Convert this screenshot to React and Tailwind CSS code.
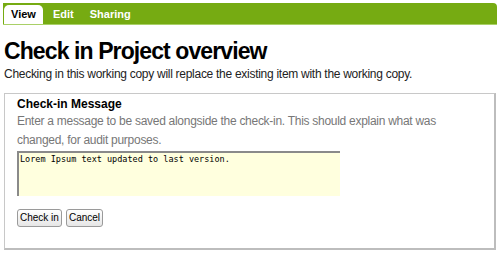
export default function App() {
  return (
    <div className="h-[256px] w-[500px] bg-white pt-[3px] font-['Liberation_Sans',Arial,sans-serif] text-black">
      <div className="mx-[3px] flex h-[22px] items-end rounded-tr-[4px] border-b border-[#a9d067] bg-[#76ab12] pl-[1px]">
        <div className="flex h-[19px] w-[39px] items-center justify-center rounded-t-[5px] bg-white text-[11px] font-bold">
          View
        </div>
        <div className="flex h-[19px] items-center pl-[10px] text-[11px] font-bold text-white">Edit</div>
        <div className="flex h-[19px] items-center pl-[16px] text-[11px] font-bold text-white">Sharing</div>
      </div>

      <h1 className="mt-[12px] pl-[4px] text-[23px] leading-[28px] font-bold tracking-[-0.9px]">
        Check in Project overview
      </h1>
      <p className="mt-[2px] pl-[4px] text-[12px] leading-[14px] tracking-[-0.28px] text-[#222]">
        Checking in this working copy will replace the existing item with the working copy.
      </p>

      <div className="mx-[4px] mt-[12px] h-[157px] border border-r-2 border-b-2 border-[#c8c8c8] border-r-[#bdbdbd] border-b-[#bdbdbd] pl-[12px] pt-[3px]">
        <div className="text-[12px] leading-[15px] font-bold">Check-in Message</div>
        <p className="w-[430px] text-[12px] leading-[19px] tracking-[-0.28px] text-[#777]">
          Enter a message to be saved alongside the check-in. This should explain what was changed, for audit purposes.
        </p>
        <div className="mt-[1px] h-[45px] w-[323px] border-t-2 border-l-2 border-[#8a8a8a] bg-[#ffffde] pl-[1px] pt-[1px] font-['DejaVu_Sans_Mono',monospace] text-[8.5px] leading-[10px]">
          Lorem Ipsum text updated to last version.
        </div>
        <div className="mt-[13px] flex gap-[4px]">
          <button className="h-[18px] rounded-[3px] border border-[#9a9a9a] bg-gradient-to-b from-white to-[#e6e6e6] px-[2px] text-[10px] leading-[14px]">
            Check in
          </button>
          <button className="h-[18px] rounded-[3px] border border-[#9a9a9a] bg-gradient-to-b from-white to-[#e6e6e6] px-[2px] text-[10px] leading-[14px]">
            Cancel
          </button>
        </div>
      </div>
    </div>
  );
}
